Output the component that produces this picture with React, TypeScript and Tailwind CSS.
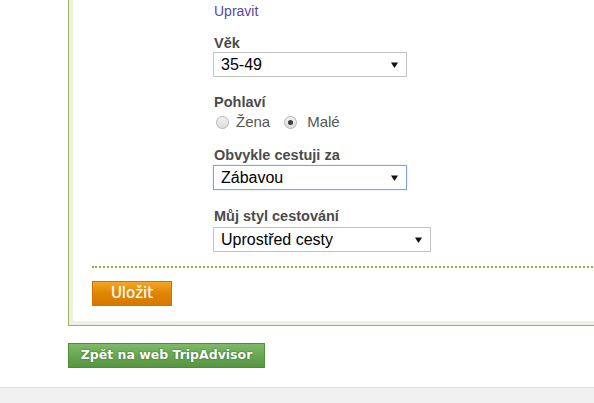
import React from 'react';

function Arrow() {
    return (
        <svg width="7" height="6" viewBox="0 0 7 6" className="shrink-0">
            <path d="M0 0.5 H7 L3.5 6 Z" fill="#111" />
        </svg>
    );
}

function FakeSelect({ value, width, focused }: { value: string; width: string; focused?: boolean }) {
    return (
        <div
            className={`${width} h-[25px] flex items-center justify-between pl-[7px] pr-[8px] bg-white border text-[16px] text-black leading-none ${
                focused ? 'border-[#7fa3e6] shadow-[0_0_1px_#9ab8ef]' : 'border-[#c3c3c3]'
            }`}
        >
            <span>{value}</span>
            <Arrow />
        </div>
    );
}

function Radio({ checked }: { checked?: boolean }) {
    return (
        <span className="w-[13px] h-[13px] rounded-full border border-[#b4b4b4] bg-gradient-to-b from-[#f2f2f2] to-[#dcdcdc] flex items-center justify-center">
            {checked && <span className="w-[5px] h-[5px] rounded-full bg-[#3c3c3c]" />}
        </span>
    );
}

function Label({ children }: { children: React.ReactNode }) {
    return <div className="text-[14.5px] leading-4 font-bold text-[#4b4b4b]">{children}</div>;
}

export default function App() {
    return (
        <div className="w-[594px] h-[403px] overflow-hidden bg-white flex flex-col font-['Liberation_Sans',Arial,sans-serif]">
            {/* profile panel */}
            <div className="ml-[68px] w-[560px] border-l border-b border-[#94b55a]">
                <div className="border-l-4 border-b-4 border-[#eef0e1] bg-white pl-[19px] pb-[15px]">
                    <div className="pl-[121px] pt-[3px]">
                        <div className="text-[14px] leading-4 text-[#5a45a6] pl-px">Upravit</div>

                        <div className="mt-[16px] pl-px">
                            <Label>Věk</Label>
                        </div>
                        <div className="mt-px">
                            <FakeSelect value="35-49" width="w-[194px]" />
                        </div>

                        <div className="mt-[17px] pl-px">
                            <Label>Pohlaví</Label>
                        </div>
                        <div className="mt-[4px] flex items-center text-[15px] leading-4 text-[#555] pl-[3px]">
                            <Radio />
                            <span className="ml-[7px]">Žena</span>
                            <span className="ml-[14px]">
                                <Radio checked />
                            </span>
                            <span className="ml-[10px]">Malé</span>
                        </div>

                        <div className="mt-[17px] pl-px">
                            <Label>Obvykle cestuji za</Label>
                        </div>
                        <div className="mt-[2px]">
                            <FakeSelect value="Zábavou" width="w-[194px]" focused />
                        </div>

                        <div className="mt-[18px] pl-px">
                            <Label>Můj styl cestování</Label>
                        </div>
                        <div className="mt-[3px]">
                            <FakeSelect value="Uprostřed cesty" width="w-[218px]" />
                        </div>
                    </div>

                    <div className="mt-[14px] border-t-2 border-dotted border-[#8ab53d]" />

                    <button className="mt-[13px] w-[80px] h-[25px] bg-gradient-to-b from-[#f4a623] via-[#e08400] to-[#d87700] border border-[#d07200] text-white text-[15px] leading-none font-['DejaVu_Sans',Verdana,sans-serif] [text-shadow:0_0_1px_rgba(255,240,200,0.6)]">
                        Uložit
                    </button>
                </div>
            </div>

            <div className="mt-[16px] ml-[68px]">
                <button className="w-[197px] h-[25px] bg-gradient-to-b from-[#7dba67] to-[#56963f] border border-[#4f8d38] text-white text-[12.5px] font-bold leading-none font-['DejaVu_Sans',Verdana,sans-serif] [text-shadow:0_0_2px_#2d5a1e]">
                    Zpět na web TripAdvisor
                </button>
            </div>

            <div className="mt-auto h-[16px] bg-[#f0f0f0] border-t border-[#dedede]" />
        </div>
    );
}
